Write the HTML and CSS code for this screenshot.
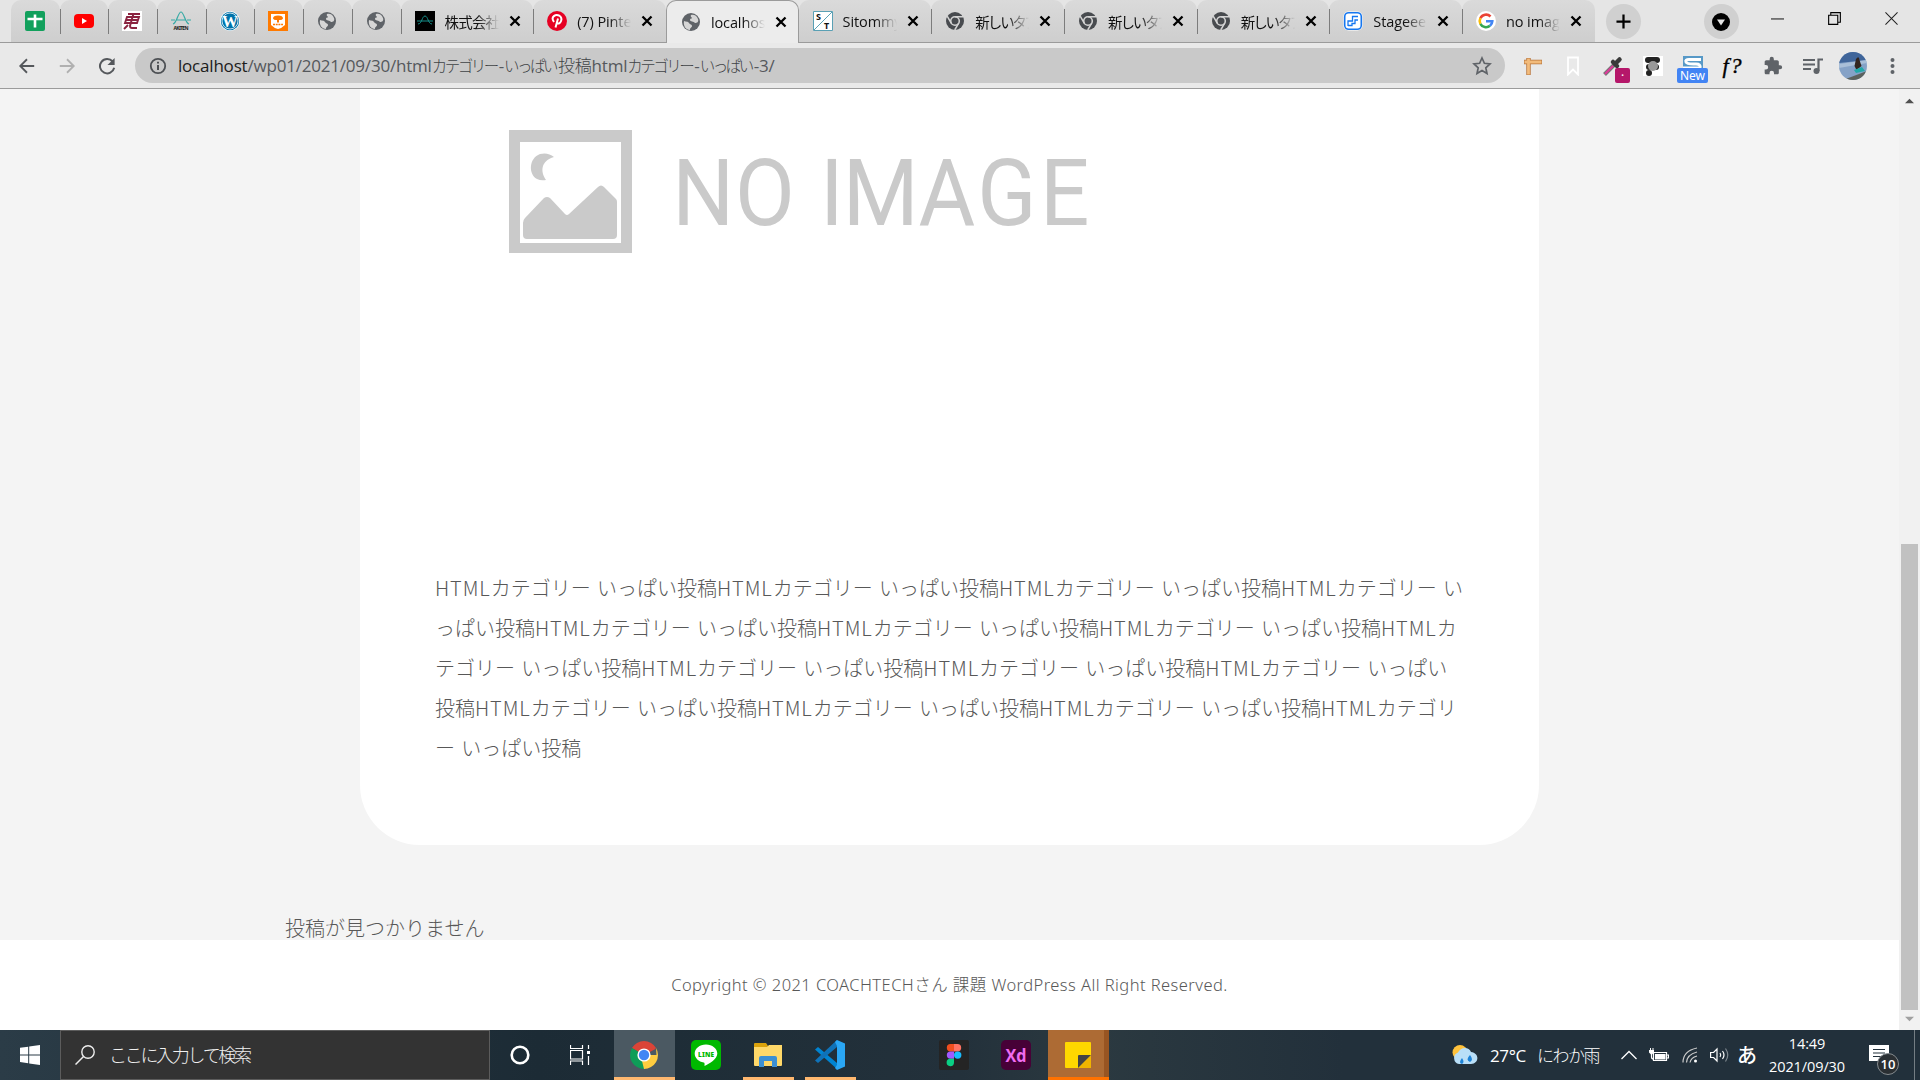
FILE: index.html
```html
<!DOCTYPE html>
<html lang="ja">
<head>
<meta charset="utf-8">
<title>localhost</title>
<link rel="stylesheet" href="styles.css">
</head>
<body>
<svg class="defs" aria-hidden="true">
  <symbol id="globe" viewBox="0 0 20 20"><circle cx="10" cy="10" r="9" fill="#5f6368"/><path d="M3 9c2 1 4 0 5 2s3 1 3 3-2 1-2 4c-4 0-7-4-6-9zM10 3c2-1 6 0 7 4 1 3-1 4-3 4-1-2-5-1-5-3s2-1 2-2-2-1-1-3z" fill="#d6d6d6"/></symbol>
  <symbol id="chrome-gray" viewBox="0 0 20 20"><circle cx="10" cy="10" r="9" fill="#484b4f"/><circle cx="10" cy="10" r="4.3" fill="#484b4f" stroke="#d4d4d4" stroke-width="1.6"/><path d="M10 5.7h8M6.2 12.2L2.200 5.200M13.700 12.200L9.700 19" stroke="#d4d4d4" stroke-width="1.5"/></symbol>
  <symbol id="x" viewBox="0 0 12 12"><path d="M1.500 1.500l9 9M10.500 1.500l-9 9" stroke="#000" stroke-width="2.300"/></symbol>
</svg>

<header class="tabs">
  <div class="tab pin"><svg class="fav" viewBox="0 0 20 20"><rect width="20" height="20" rx="2" fill="#12a05c"/><path d="M10 3.500v13M2.500 8h15" stroke="#fff" stroke-width="2.600"/></svg></div>
  <div class="tab pin"><svg class="fav" viewBox="0 0 20 20"><rect y="3" width="20" height="14" rx="4" fill="#f00"/><path d="M8 7v6l5-3z" fill="#fff"/></svg></div>
  <div class="tab pin"><svg class="fav" viewBox="0 0 20 20"><path d="M0 0h20v20H0z" fill="#fff"/><path d="M6 3h12M5 6h12l-2 6H3zM4 9h12M11.500 2.500L8 15q0 2 2 2h5M6 14l-4 4" stroke="#8b2340" stroke-width="1.900" fill="none"/></svg></div>
  <div class="tab pin"><svg class="fav" viewBox="0 0 20 20"><path d="M0 9h4M16 9h4M2 13C6 12 7 1 10 1s4 11 8 12M5 9h10" stroke="#37aaa5" stroke-width="1.200" fill="none"/><text x="2.500" y="19" font-size="5" font-weight="700" textLength="15" fill="#222">AKITEN</text></svg></div>
  <div class="tab pin"><svg class="fav" viewBox="0 0 20 20"><circle cx="10" cy="10" r="10" fill="#fff"/><circle cx="10" cy="10" r="9.200" fill="#0073aa"/><circle cx="10" cy="10" r="8" fill="none" stroke="#fff" stroke-width=".8"/><text x="10" y="15.500" text-anchor="middle" font-family="Liberation Serif,serif" font-size="16" font-weight="700" fill="#fff">W</text></svg></div>
  <div class="tab pin"><svg class="fav" viewBox="0 0 20 20"><path d="M0 0h20v20H0z" fill="#ff7a00"/><path d="M3 3h14v11q-3 3-7 4-4-1-7-4z" fill="#fff"/><path d="M5 7.500q0-3 5-3t5 3q-1 2-4 1.500v2.500H9V9q-3 .5-4-1.500z" fill="#ff7a00"/><path d="M5 13.500h10" stroke="#ff7a00" stroke-width="1.600" stroke-dasharray="2 .7"/></svg></div>
  <div class="tab pin"><svg class="fav"><use href="#globe"/></svg></div>
  <div class="tab pin"><svg class="fav"><use href="#globe"/></svg></div>
  <div class="tab"><svg class="fav" viewBox="0 0 20 20"><path d="M0 0h20v20H0z"/><path d="M3 13C7 13 7 5 10 5s3 8 7 8M2 10h16" stroke="#168f8a" fill="none"/></svg><span class="title">株式会社</span><svg class="close"><use href="#x"/></svg></div>
  <div class="tab"><svg class="fav" viewBox="0 0 20 20"><circle cx="10" cy="10" r="10" fill="#e60023"/><path d="M8.500 16.500L11 7.500M7 11C3 5.500 9 3 12 4.500c5 3 1 9-1.500 8" stroke="#fff" stroke-width="2" fill="none"/></svg><span class="title latin">(7) Pinterest</span><svg class="close"><use href="#x"/></svg></div>
  <div class="tab active"><svg class="fav"><use href="#globe"/></svg><span class="title latin">localhost</span><svg class="close"><use href="#x"/></svg></div>
  <div class="tab nosep"><svg class="fav" viewBox="0 0 20 20"><path d="M.5.500h19v19H.5z" fill="#fff" stroke="#5aa0b4"/><path d="M1 19L19 1" stroke="#5aa0b4"/><text x="3" y="9" font-size="9" font-weight="700" fill="#111">S</text><text x="11" y="18" font-size="9" font-weight="700" fill="#111">T</text></svg><span class="title latin">Sitommy</span><svg class="close"><use href="#x"/></svg></div>
  <div class="tab"><svg class="fav"><use href="#chrome-gray"/></svg><span class="title">新しいタブ</span><svg class="close"><use href="#x"/></svg></div>
  <div class="tab"><svg class="fav"><use href="#chrome-gray"/></svg><span class="title">新しいタブ</span><svg class="close"><use href="#x"/></svg></div>
  <div class="tab"><svg class="fav"><use href="#chrome-gray"/></svg><span class="title">新しいタブ</span><svg class="close"><use href="#x"/></svg></div>
  <div class="tab"><svg class="fav" viewBox="0 0 20 20"><rect x=".5" y=".5" width="19" height="19" rx="5" fill="#fff"/><rect x="1.700" y="1.700" width="16.600" height="16.600" rx="4" fill="none" stroke="#1677f0" stroke-width="1.600"/><path d="M5 15V10h4.500V5.500H15M5 14.500h4v-2h3V9h3" stroke="#1677f0" stroke-width="1.300" fill="none"/></svg><span class="title latin">Stageee</span><svg class="close"><use href="#x"/></svg></div>
  <div class="tab"><svg class="fav" viewBox="0 0 20 20"><circle cx="10" cy="10" r="10" fill="#fff"/><g fill="none" stroke-width="2.600"><path d="M14.500 5.500A6.300 6.300 0 0 0 4.400 7.200" stroke="#ea4335"/><path d="M4.400 7.200a6.300 6.300 0 0 0 0 5.600" stroke="#fbbc05"/><path d="M4.400 12.800a6.300 6.300 0 0 0 9.600 2" stroke="#34a853"/><path d="M14 14.800a6.300 6.300 0 0 0 2.300-4.600H10" stroke="#4285f4"/></g></svg><span class="title latin">no image</span><svg class="close"><use href="#x"/></svg></div>
  <div class="round plus"><svg viewBox="0 0 16 16"><path d="M8 .5v15M.5 8h15" stroke="#000" stroke-width="2.400"/></svg></div>
  <div class="round drop"><svg viewBox="0 0 18 18"><circle cx="9" cy="9" r="9"/><path d="M5 6.500h8l-4 6z" fill="#e5e5e5"/></svg></div>
  <div class="win"><svg viewBox="0 0 14 14"><path d="M0 7.500h14" stroke="#000"/></svg></div>
  <div class="win"><svg viewBox="0 0 14 14"><path d="M.7 3.500h9.800v9.800H.7zM3 3.500V.7h10.300v10.300h-2.800" fill="none" stroke="#000" stroke-width="1.200"/></svg></div>
  <div class="win"><svg viewBox="0 0 14 14"><path d="M.5.500l13 13M13.500.500l-13 13" stroke="#222" stroke-width="1.100"/></svg></div>
</header>

<nav class="toolbar">
  <div class="nav-btn"><svg viewBox="0 0 20 20"><path d="M18 10H3M10 2.500L2.500 10l7.500 7.500" fill="none" stroke="#55585c" stroke-width="2"/></svg></div>
  <div class="nav-btn"><svg viewBox="0 0 20 20"><path d="M2 10h15M10 2.500l7.500 7.500-7.500 7.500" fill="none" stroke="#b0b0b0" stroke-width="2"/></svg></div>
  <div class="nav-btn"><svg viewBox="0 0 20 20"><path d="M16.300 5A8 8 0 1 0 18 12" fill="none" stroke="#55585c" stroke-width="2.200"/><path d="M18.500 1v8h-8z" fill="#55585c"/></svg></div>
  <div class="omnibox">
    <svg class="info" viewBox="0 0 18 18"><circle cx="9" cy="9" r="7.200" fill="none" stroke="#4d5054" stroke-width="1.800"/><path d="M9 8v5M9 4.800v1.800" stroke="#4d5054" stroke-width="2"/></svg>
    <p class="url"><span class="host">localhost</span>/wp01/2021/09/30/html<span class="kana">カテゴリー</span>-<span class="kana">いっぱい</span><span class="kanji">投稿</span>html<span class="kana">カテゴリー</span>-<span class="kana">いっぱい</span>-3/</p>
    <svg class="star" viewBox="0 0 20 20"><path d="M10 2l2.400 5.300 5.600.6-4.200 3.900 1.200 5.700-5-2.900-5 2.900 1.200-5.700L2 7.900l5.600-.6z" fill="none" stroke="#5f6368" stroke-width="1.700"/></svg>
  </div>
  <div class="ext"><svg viewBox="0 0 20 20"><path d="M5.500 2v17M1 6h18" stroke="#b9743a" stroke-width="4.400"/><path d="M5.500 2.500v16M1.500 6h17" stroke="#f2bb7b" stroke-width="2.800"/></svg></div>
  <div class="ext"><svg viewBox="0 0 20 20"><path d="M5 1.500h10v17l-5-5-5 5z" fill="none" stroke="#fff" stroke-width="1.800"/></svg></div>
  <div class="ext"><svg viewBox="0 0 20 20"><path d="M1.500 18.500L11 9" stroke="#777" stroke-width="4"/><path d="M2 18l8-8" stroke="#e0389a" stroke-width="2"/><path d="M10 6l4 4M12.500 7.500L16.500 3.500" stroke="#3a3a3a" stroke-width="4.500" stroke-linecap="round"/></svg><span class="badge pink">·</span></div>
  <div class="ext"><svg viewBox="0 0 20 20"><path d="M0 0h20v20H0z" fill="#fff"/><rect x="2" y="1" width="15" height="6" rx="3" fill="#222"/><rect x="3" y="8" width="13" height="6" rx="3" fill="#222"/><circle cx="10" cy="10" r="5" fill="#999"/><circle cx="6" cy="17" r="3" fill="#222"/></svg></div>
  <div class="ext"><svg viewBox="0 0 20 20"><path d="M0 0h20v18H0z" fill="#5799c7"/><path d="M18 3.500H6q-4 0-3 2.500t10 2q5 0 4 4H0" stroke="#fff" stroke-width="3" fill="none"/></svg><span class="badge blue">New</span></div>
  <div class="ext fq">f?</div>
  <div class="ext"><svg viewBox="0 0 24 24"><path d="M20.500 11H19V7c0-1.100-.9-2-2-2h-4V3.500a2.500 2.500 0 0 0-5 0V5H4c-1.100 0-2 .9-2 2v3.800h1.500a2.700 2.700 0 0 1 0 5.400H2V20c0 1.100.9 2 2 2h3.800v-1.500a2.700 2.700 0 0 1 5.400 0V22H17c1.100 0 2-.9 2-2v-4h1.500a2.500 2.500 0 0 0 0-5z" fill="#5f6368"/></svg></div>
  <div class="ext"><svg viewBox="0 0 20 20"><path d="M0 4h12M0 8.500h12M0 13h8" stroke="#5f6368" stroke-width="2"/><path d="M15.500 15V3.500H20" stroke="#5f6368" stroke-width="2.200" fill="none"/><circle cx="13.500" cy="15" r="3" fill="#5f6368"/></svg></div>
  <div class="ext"><svg class="avatar" viewBox="0 0 28 28"><defs><clipPath id="av"><circle cx="14" cy="14" r="14"/></clipPath></defs><g clip-path="url(#av)"><path d="M0 0h28v28H0z" fill="#85a2c7"/><path d="M0 0h28v8L0 11z" fill="#3f659a"/><path d="M0 12l28-4v3L0 16z" fill="#a9bfd8"/><path d="M4 28l24-9v9z" fill="#5c625e"/><path d="M17 7q3-4 3.500 1l2 6-5 4-2-4z" fill="#33251f"/><path d="M15 18l8-3 3 4-9 2z" fill="#20a9a8"/></g></svg></div>
  <div class="ext"><svg viewBox="0 0 20 20"><g fill="#5f6368"><circle cx="9.500" cy="4" r="2"/><circle cx="9.500" cy="10" r="2"/><circle cx="9.500" cy="16" r="2"/></g></svg></div>
</nav>

<div class="viewport">
  <main class="page">
    <article class="card">
      <svg class="noimage" viewBox="0 0 1029 440" role="img" aria-label="NO IMAGE">
        <path d="M74 41h123v123H74zM85 53v101h101V53z" fill="#cacaca" fill-rule="evenodd"/>
        <path d="M119 68q-6-5-14-3c-11 4-12 20-3 25q4 2 9 1c-6-9-5-19 8-23z" fill="#cacaca"/>
        <path d="M88 134q0-3 2-5l19-20q3-2 6 0l15 16q2 2 4 0l29-27q3-3 6 0l12 12q1 1 1 3v33q0 4-4 4H92q-4 0-4-4z" fill="#cacaca"/>
        <text class="noimage-text" transform="scale(.93 1)" y="136.500" x="255.200 322.500 414 438.500 519.800 583 650.500">NOIMAGE</text>
      </svg>
      <p class="body"><span>HTML</span>カテゴリー いっぱい投稿<span>HTML</span>カテゴリー いっぱい投稿<span>HTML</span>カテゴリー いっぱい投稿<span>HTML</span>カテゴリー い<br>っぱい投稿<span>HTML</span>カテゴリー いっぱい投稿<span>HTML</span>カテゴリー いっぱい投稿<span>HTML</span>カテゴリー いっぱい投稿<span>HTML</span>カ<br>テゴリー いっぱい投稿<span>HTML</span>カテゴリー いっぱい投稿<span>HTML</span>カテゴリー いっぱい投稿<span>HTML</span>カテゴリー いっぱい<br>投稿<span>HTML</span>カテゴリー いっぱい投稿<span>HTML</span>カテゴリー いっぱい投稿<span>HTML</span>カテゴリー いっぱい投稿<span>HTML</span>カテゴリ<br>ー いっぱい投稿</p>
    </article>
    <p class="empty">投稿が見つかりません</p>
    <footer class="copyright"><span>Copyright © 2021 COACHTECHさん 課題 WordPress All Right Reserved.</span></footer>
  </main>
  <aside class="scrollbar">
    <svg viewBox="0 0 10 6"><path d="M0 5.500h10L5 .5z" fill="#505050"/></svg>
    <div class="thumb"></div>
    <svg viewBox="0 0 10 6"><path d="M0 .5h10L5 5.500z" fill="#a0a0a0"/></svg>
  </aside>
</div>

<footer class="taskbar">
  <div class="start"><svg viewBox="0 0 20 20"><path d="M0 2.800L8.200 1.700v7.700H0zM9.200 1.500L20 0v9.400H9.200zM0 10.400h8.200v7.800L0 17.100zM9.200 10.400H20V20L9.200 18.400z" fill="#fff"/></svg></div>
  <div class="search"><svg viewBox="0 0 20 20"><circle cx="13" cy="7" r="6.200" fill="none" stroke="#eee" stroke-width="1.400"/><path d="M8.500 11.500L.5 19.500" stroke="#eee" stroke-width="1.500"/></svg><span class="search-text">ここに入力して検索</span></div>
  <div class="sys"><svg viewBox="0 0 20 20"><circle cx="10" cy="10" r="8.300" fill="none" stroke="#fff" stroke-width="2.600"/></svg></div>
  <div class="sys"><svg viewBox="0 0 20 20"><path d="M.5 0v3.500h12V0M.5 5.500h12v8.500H.5zM.5 20v-4h12v4M18.500 0v4M18.500 11v9" fill="none" stroke="#fff" stroke-width="1.200"/><path d="M17 6h3v3h-3z" fill="#fff"/></svg></div>
  <div class="app current"><svg viewBox="0 0 28 28"><path d="M14 14L1.900 7A14 14 0 0 1 26.100 7z" fill="#db4437"/><path d="M14 14h12.500L26.100 7A14 14 0 0 1 14 28z" fill="#ffcd40"/><path d="M14 14L14 28A14 14 0 0 1 1.900 7z" fill="#0f9d58"/><path d="M14 7.500h12.400L14 14z" fill="#db4437"/><path d="M19.500 17.500L14 28l-2-8z" fill="#ffcd40"/><circle cx="14" cy="14" r="6.600" fill="#fff"/><circle cx="14" cy="14" r="5.200" fill="#4285f4"/></svg></div>
  <div class="app"><svg class="big" viewBox="0 0 30 30"><rect width="30" height="30" rx="5" fill="#00b900"/><path d="M15 4.500c-6.500 0-11.300 4-11.300 9 0 4.500 4 8.200 9 9 1 .2 1 1 .8 3.500 5-2.500 12.800-7 12.800-12.500 0-5-5-9-11.300-9z" fill="#fff"/><text x="7" y="16.500" font-size="6.500" font-weight="900" textLength="16" fill="#00b900">LINE</text></svg></div>
  <div class="app running"><svg viewBox="0 0 28 28"><path d="M0 3q0-1 1-1h11l2 3v5H0z" fill="#dba20b"/><path d="M0 6h13l2-2h13v20q0 1-1 1H1q-1 0-1-1z" fill="#ffd869"/><path d="M5 26V17q0-2 2-2h14q2 0 2 2v9h-5v-6h-8v6z" fill="#3c8fd3"/></svg></div>
  <div class="app running"><svg class="big" viewBox="0 0 30 30"><path d="M0 9.500L3 7l19 16v6z" fill="#0084d2"/><path d="M0 20.500L3 23 22 7V0z" fill="#0f72b8"/><path d="M22 0l8 3.500v23L22 30l-2-2 2-3V6l-2-4z" fill="#2aa7f5"/></svg></div>
  <div class="app"></div>
  <div class="app"><svg class="big" viewBox="0 0 30 30"><rect width="30" height="30" rx="2" fill="#242424"/><path d="M15 4h-3.500a3.700 3.700 0 0 0 0 7.400H15z" fill="#f24e1e"/><path d="M15 4h3.500a3.700 3.700 0 0 1 0 7.400H15z" fill="#ff7262"/><path d="M15 11.400h-3.500a3.700 3.700 0 0 0 0 7.400H15z" fill="#a259ff"/><circle cx="18.700" cy="15.100" r="3.700" fill="#1abcfe"/><path d="M15 18.800h-3.500a3.700 3.700 0 1 0 3.500 3.700z" fill="#0acf83"/></svg></div>
  <div class="app"><svg class="big" viewBox="0 0 30 30"><rect width="30" height="30" rx="5" fill="#470137"/><text x="4.500" y="21.500" font-family="Open Sans,sans-serif" font-weight="700" font-size="17" textLength="21" lengthAdjust="spacingAndGlyphs" fill="#f06cf0">Xd</text></svg></div>
  <div class="app notes"><svg viewBox="0 0 26 26"><rect width="26" height="26" rx="1" fill="#ffd800"/><path d="M13 26L26 13v13z" fill="#f0b400"/><path d="M13 26V14q0-1 1-1h12z" fill="#444"/></svg></div>
  <div class="tray">
    <svg class="weather" viewBox="0 0 26 20"><circle cx="8" cy="7.500" r="7.500" fill="#ffc23c"/><path d="M7 19a6 6 0 0 1-1-11.500C8 2 17 1 19 7c9 1 8 12 0 12z" fill="#b9dff8"/><path d="M10 13q3 4 0 6-4-1 0-6zM18 10q4 5 0 7-5-2 0-7z" fill="#1d83d8"/></svg>
    <span class="temp">27°C</span><span class="rain">にわか雨</span>
    <svg class="chev" viewBox="0 0 16 10"><path d="M.5 9L8 1.500 15.500 9" fill="none" stroke="#fff" stroke-width="1.300"/></svg>
    <svg class="batt" viewBox="0 0 20 14"><path d="M4.500 4.500h13v8h-13zM18 7h1.500v3H18M2.500 6v3q0 2 2 2" fill="none" stroke="#fff" stroke-width="1.200"/><path d="M6 6h10.500v5.500H6zM0 2h5v2.500L2.500 7 0 4.500zM1 0h1v2H1zM3.500 0h1v2h-1z" fill="#fff"/></svg>
    <svg class="wifi" viewBox="0 0 16 16"><path d="M1 15.500Q1 4 15 1M4.500 15.500Q5 7.500 15 5M8 15.500Q9 10.500 15 9" fill="none" stroke="#ccc" stroke-width="1.200"/><circle cx="13.500" cy="14" r="1.500" fill="#fff"/></svg>
    <svg class="vol" viewBox="0 0 20 16"><path d="M.6 5.500h3L7 2v12l-3.400-3.500h-3zM10 6q1.500 2 0 4M12.500 4q3 4 0 8" fill="none" stroke="#fff" stroke-width="1.200"/><path d="M15.500 1.500q4.500 6.500 0 13" fill="none" stroke="#7d878e" stroke-width="1.200"/></svg>
    <span class="ime">あ</span>
    <div class="clock"><span>14:49</span><span>2021/09/30</span></div>
    <div class="notice"><svg viewBox="0 0 20 20"><path d="M0 0h20v16H5l-5 0z" fill="#fff"/><path d="M4 4.500h12M4 8h12M4 11.500h9" stroke="#22303b" stroke-width="1.200"/></svg><b class="count">10</b></div>
  </div>
</footer>
</body>
</html>
```

FILE: styles.css
```css
* { box-sizing: border-box; }
body {
  margin: 0;
  width: 1920px;
  height: 1080px;
  overflow: hidden;
  display: flex;
  flex-direction: column;
  font-family: "Noto Sans", "Noto Sans CJK JP", sans-serif;
}
p { margin: 0; }
svg { display: block; flex: none; }
.defs { position: absolute; width: 0; height: 0; }

/* Tab strip */
.tabs {
  flex: none;
  height: 43px;
  display: flex;
  align-items: stretch;
  padding-left: 11px;
  background: #e5e5e5;
  border-bottom: 1px solid #9b9b9b;
}
.tab {
  position: relative;
  flex: none;
  width: 132.700px;
  height: 42px;
  display: flex;
  align-items: center;
  padding-left: 14px;
  border-radius: 10px 10px 0 0;
  background: linear-gradient(#dadada, #cecece);
}
.tab:not(:first-child):not(.active):not(.nosep)::before {
  content: "";
  position: absolute;
  left: 0;
  top: 9px;
  width: 1px;
  height: 25px;
  background: #7c7c7c;
}
.pin { width: 48.700px; }
.fav { width: 20px; height: 20px; }
.title {
  width: 54px;
  margin-left: 10px;
  padding-top: 2px;
  overflow: hidden;
  white-space: nowrap;
  font: 400 14.500px/24px "Noto Sans CJK JP", sans-serif;
  letter-spacing: -.8px;
  font-feature-settings: "palt";
  color: #111;
  -webkit-mask-image: linear-gradient(90deg, #000 60%, transparent);
  mask-image: linear-gradient(90deg, #000 60%, transparent);
}
.latin { font: 400 14.500px/24px "Open Sans", sans-serif; letter-spacing: -.1px; }
.close { width: 12px; height: 12px; margin-left: 10px; }
.active {
  height: 43px;
  padding-bottom: 1px;
  background: #ececec;
  border: 1px solid #9b9b9b;
  border-bottom: 0;
  padding-left: 14px;
}
.round {
  flex: none;
  width: 35px;
  height: 35px;
  margin-top: 4px;
  border-radius: 50%;
  background: #d0d0d0;
  display: grid;
  place-items: center;
}
.plus { margin-left: 11px; }
.plus svg { width: 15px; }
.drop { margin-left: 63px; margin-right: 10px; }
.drop svg { width: 18px; }
.win { width: 57px; height: 37px; display: grid; place-items: center; }
.win svg { width: 13px; height: 13px; }

/* Address bar */
.toolbar {
  flex: none;
  height: 46px;
  display: flex;
  align-items: center;
  padding-left: 7px;
  background: #e9e9e9;
  border-bottom: 1px solid #9b9b9b;
}
.nav-btn { width: 40px; display: grid; place-items: center; }
.nav-btn svg { width: 18px; height: 18px; }
.omnibox {
  width: 1370px;
  height: 35px;
  margin: 0 8px;
  padding: 0 13px 0 14px;
  display: flex;
  align-items: center;
  border-radius: 18px;
  background: #c9c9c9;
}
.info { width: 18px; height: 18px; }
.url {
  flex: 1;
  margin-left: 11px;
  white-space: nowrap;
  font: 400 17px/24px "Open Sans", "Noto Sans CJK JP", sans-serif;
  letter-spacing: -.2px;
  color: #55585c;
}
.host { color: #1c1c1c; }
.kana { font-size: 15.500px; font-weight: 300; letter-spacing: -2.500px; margin-right: 2px; color: #404346; }
.kanji { font-weight: 300; color: #404346; }
.star { width: 20px; height: 20px; }
.ext { position: relative; width: 40px; height: 36px; display: grid; place-items: center; }
.ext svg { width: 20px; height: 20px; }
.ext .avatar { width: 28px; height: 28px; }
.badge {
  position: absolute;
  top: 20px;
  height: 15px;
  border-radius: 2px;
  color: #fff;
  font-size: 12px;
  line-height: 15px;
  text-align: center;
}
.pink { left: 22px; width: 15px; background: #b5176a; }
.blue { left: 4px; width: 31px; background: #4284f4; }
.fq {
  display: flex;
  justify-content: center;
  align-items: center;
  font: italic 400 22px/28px "Liberation Serif", serif;
  -webkit-text-stroke: .4px #000;
  letter-spacing: 2px;
}

/* Web page */
.viewport { flex: 1; min-height: 0; display: flex; background: #f4f4f4; }
.page { width: 1899px; display: flex; flex-direction: column; }
.card {
  width: 1179px;
  height: 756px;
  margin: 0 auto;
  padding: 0 75px;
  border-radius: 0 0 60px 60px;
  background: #fff;
}
.noimage { width: 1029px; height: 440px; }
.noimage-text { font: 400 93.500px Roboto, sans-serif; fill: #cacaca; }
.body {
  margin-top: 39px;
  font: 300 20px/40px "Noto Sans CJK JP", sans-serif;
  word-spacing: 1.900px;
  white-space: nowrap;
  color: #585858;
}
.body span { letter-spacing: .9px; }
.empty {
  margin: 71px 0 0 285px;
  font: 300 20px/24px "Noto Sans CJK JP", sans-serif;
  color: #585858;
}
.copyright {
  flex: 1;
  display: grid;
  place-items: center;
  background: #fff;
  font: 300 16.500px/24px "Noto Sans", "Noto Sans CJK JP", sans-serif;
  letter-spacing: .44px;
  color: #585858;
}
.scrollbar {
  width: 21px;
  display: flex;
  flex-direction: column;
  align-items: center;
  justify-content: space-between;
  padding: 9px 0 8px;
  background: #f1f1f1;
}
.scrollbar svg { width: 9px; height: 6px; }
.thumb { width: 17px; height: 466px; margin: auto 0 6px; background: #c1c1c1; }

/* Taskbar */
.taskbar {
  flex: none;
  height: 50px;
  display: flex;
  background: linear-gradient(90deg, #2b3c47, #1c2b35 28%, #23313b 50%, #2b3940 57%, #22303b 70%);
  color: #fff;
}
.start { width: 60px; display: grid; place-items: center; }
.start svg { width: 20px; height: 20px; }
.search {
  width: 430px;
  display: flex;
  align-items: center;
  padding-left: 14px;
  gap: 14px;
  background: #333;
  border: 1px solid #5c5c5c;
}
.search svg { width: 20px; height: 20px; }
.search-text {
  padding-bottom: 2px;
  font: 300 18px/28px "Noto Sans CJK JP", sans-serif;
  letter-spacing: -2.300px;
  color: #f0f0f0;
}
.sys { width: 60px; display: grid; place-items: center; }
.sys svg { width: 20px; height: 20px; }
.sys + .app { margin-left: 4px; }
.app {
  width: 62px;
  display: grid;
  place-items: center;
}
.app svg { width: 28px; height: 28px; }
.app .big { width: 30px; height: 30px; }
.current {
  width: 61px;
  padding-right: 1px;
  background: #4b5962;
  box-shadow: inset 0 -3px #ffb86f;
}
.running {
  background: linear-gradient(#ffb86f, #ffb86f) center bottom / 51px 3px no-repeat;
}
.notes {
  width: 61px;
  margin-left: 1px;
  padding-right: 1px;
  background: linear-gradient(90deg, #ad6b34 56px, #985522 56px);
  box-shadow: inset 0 -3px #ff7200;
}
.notes svg { width: 26px; height: 26px; }
.tray {
  flex: 1;
  margin-right: 5px;
  padding-left: 343px;
  border-right: 1px solid #747d83;
  display: flex;
  align-items: center;
  font-family: "Open Sans", sans-serif;
}
.weather { width: 26px; height: 20px; }
.temp { width: 37px; margin-left: 12px; font-size: 17px; letter-spacing: -.4px; }
.rain { width: 62px; margin-left: 10px; font: 300 17px/26px "Noto Sans CJK JP", sans-serif; letter-spacing: -1.500px; white-space: nowrap; }
.chev { width: 16px; height: 10px; margin-left: 22px; }
.batt { width: 20px; height: 14px; margin-left: 12px; }
.wifi { width: 16px; height: 16px; margin-left: 13px; }
.vol { width: 20px; height: 16px; margin-left: 12px; }
.ime { margin-left: 7px; font: 500 20px/30px "Noto Sans CJK JP", sans-serif; }
.clock {
  width: 80px;
  margin-left: 10px;
  display: flex;
  flex-direction: column;
  align-items: center;
  font-size: 14.500px;
  line-height: 23px;
  letter-spacing: -.1px;
}
.notice { position: relative; margin-left: 22px; }
.notice svg { width: 20px; height: 20px; }
.count {
  position: absolute;
  left: 8px;
  top: 8px;
  width: 22px;
  height: 22px;
  border: 1px solid #858b8f;
  border-radius: 50%;
  background: #2a2f33;
  font: 600 13px/20px "Open Sans", sans-serif;
  text-align: center;
}
```
